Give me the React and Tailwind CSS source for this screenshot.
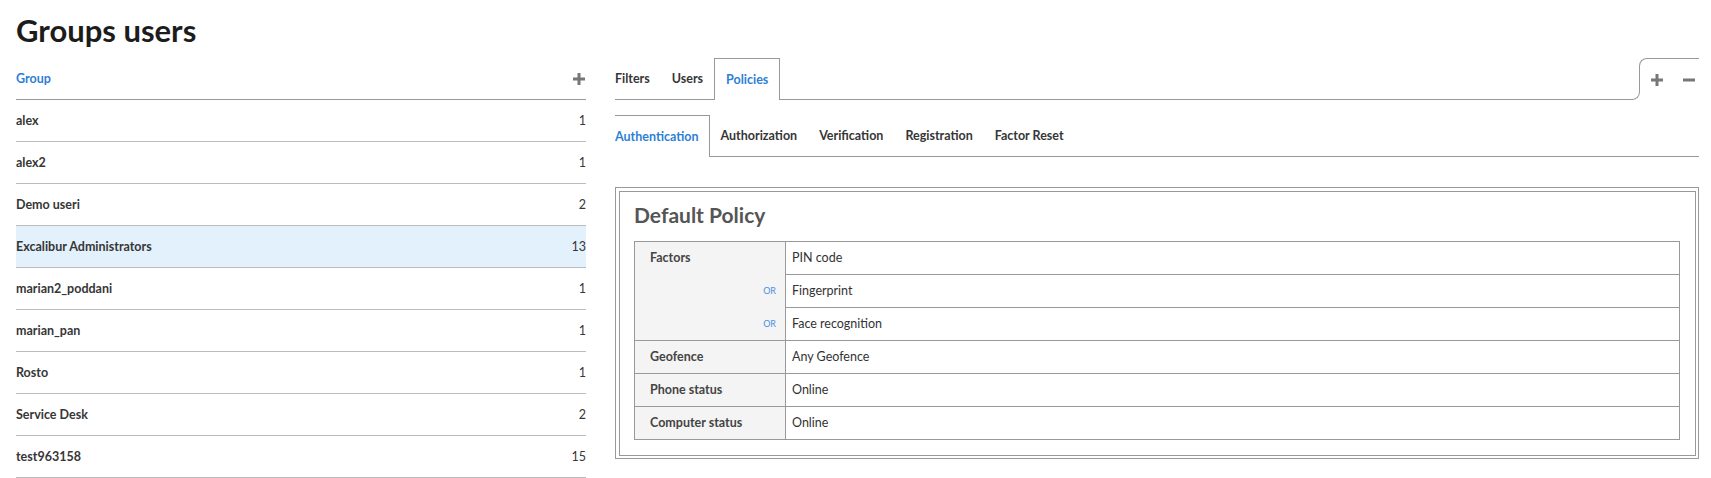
import React from 'react';

const groups = [
  { name: 'alex', count: 1 },
  { name: 'alex2', count: 1 },
  { name: 'Demo useri', count: 2 },
  { name: 'Excalibur Administrators', count: 13, selected: true },
  { name: 'marian2_poddani', count: 1 },
  { name: 'marian_pan', count: 1 },
  { name: 'Rosto', count: 1 },
  { name: 'Service Desk', count: 2 },
  { name: 'test963158', count: 15 },
];

const PlusIcon = ({ className }) => (
  <svg viewBox="0 0 12 12" className={className}>
    <rect x="4.5" y="0" width="3" height="12" fill="currentColor" />
    <rect x="0" y="4.5" width="12" height="3" fill="currentColor" />
  </svg>
);

const MinusIcon = ({ className }) => (
  <svg viewBox="0 0 12 12" className={className}>
    <rect x="0" y="4.5" width="12" height="3" fill="currentColor" />
  </svg>
);

const policyRows = [
  { label: 'Geofence', value: 'Any Geofence' },
  { label: 'Phone status', value: 'Online' },
  { label: 'Computer status', value: 'Online' },
];

const subTabs = ['Authentication', 'Authorization', 'Verification', 'Registration', 'Factor Reset'];

export default function App() {
  return (
    <div className="min-h-screen bg-white font-['Lato','Liberation_Sans',sans-serif] text-[#333]">
      <div className="pl-4 pr-[12px]">
        <h1 className="pt-[12px] pb-[10px] text-[31px] leading-[36px] font-bold text-[#1c1c1c]">Groups users</h1>

        <div className="flex gap-[29px]">
          {/* groups list */}
          <div className="w-[570px] shrink-0">
            <div className="h-[42px] flex items-center justify-between border-b border-[#999]">
              <span className="pt-[2px] text-[12.5px] font-bold text-[#2d7fd6]">Group</span>
              <PlusIcon className="w-3 h-3 text-[#777] mr-px" />
            </div>
            {groups.map((g) => (
              <div
                key={g.name}
                className={`h-[42px] pt-[2px] flex items-center justify-between border-b border-[#bbb] text-[12.5px] ${g.selected ? 'bg-[#e3f1fc]' : ''}`}
              >
                <span className="font-bold text-[#363636]">{g.name}</span>
                <span className="text-[#363636]">{g.count}</span>
              </div>
            ))}
          </div>

          {/* right side */}
          <div className="flex-1 min-w-0">
            <div className="flex h-[42px]">
              <div className="flex-1 flex border-b border-[#999] text-[12.5px] font-bold">
                <div className="flex items-center pt-[2px] pr-[11px] text-[#363636]">Filters</div>
                <div className="flex items-center pt-[2px] px-[11px] text-[#363636]">Users</div>
                <div className="flex items-center pt-[2px] px-[11px] border-t border-l border-r border-[#999] bg-white -mb-px text-[#2d7fd6]">Policies</div>
              </div>
              <div className="w-[16px] flex flex-col">
                <div className="h-1/2 ml-[8px] border-t border-l border-[#999] rounded-tl-[8px]" />
                <div className="h-1/2 w-[9px] border-b border-r border-[#999] rounded-br-[8px]" />
              </div>
              <div className="w-[52px] border-t border-[#999] flex items-center pl-[4px] gap-[20px] text-[#777]">
                <PlusIcon className="w-3 h-3" />
                <MinusIcon className="w-3 h-3" />
              </div>
            </div>

            <div className="mt-[15px] flex h-[42px] border-b border-[#999] text-[12.5px] font-bold">
              {subTabs.map((t, i) =>
                i === 0 ? (
                  <div key={t} className="flex items-center pt-[2px] pr-[10px] border-t border-r border-[#999] bg-white -mb-px text-[#2d7fd6]">{t}</div>
                ) : (
                  <div key={t} className="flex items-center pt-[2px] px-[11px] text-[#363636]">{t}</div>
                )
              )}
            </div>

            <div className="mt-[30px] border border-[#999] pt-[3px] pl-[3px] pr-[2px] pb-[2px]">
              <div className="border border-[#999] pt-[10px] pl-[14px] pr-[15px] pb-[15px]">
                <h2 className="h-[26px] leading-[26px] text-[21px] font-bold text-[#555] mb-[13px]">Default Policy</h2>
                <div className="border border-[#999] text-[12.5px]">
                  <div className="flex">
                    <div className="w-[151px] shrink-0 bg-[#f4f4f4] border-r border-[#999]">
                      <div className="h-[32px] flex items-center pl-[15px] font-bold text-[#444]">Factors</div>
                      <div className="h-[33px] flex items-center justify-end pr-[9px] text-[9px] text-[#4a8fe0]">OR</div>
                      <div className="h-[33px] flex items-center justify-end pr-[9px] text-[9px] text-[#4a8fe0]">OR</div>
                    </div>
                    <div className="flex-1">
                      <div className="h-[32px] flex items-center pl-[6px] text-[#333]">PIN code</div>
                      <div className="h-[33px] flex items-center pl-[6px] border-t border-[#999] text-[#333]">Fingerprint</div>
                      <div className="h-[33px] flex items-center pl-[6px] border-t border-[#999] text-[#333]">Face recognition</div>
                    </div>
                  </div>
                  {policyRows.map((r) => (
                    <div key={r.label} className="flex h-[33px] border-t border-[#999]">
                      <div className="w-[151px] shrink-0 bg-[#f4f4f4] border-r border-[#999] flex items-center pl-[15px] font-bold text-[#444]">{r.label}</div>
                      <div className="flex-1 flex items-center pl-[6px] text-[#333]">{r.value}</div>
                    </div>
                  ))}
                </div>
              </div>
            </div>
          </div>
        </div>
      </div>
    </div>
  );
}
